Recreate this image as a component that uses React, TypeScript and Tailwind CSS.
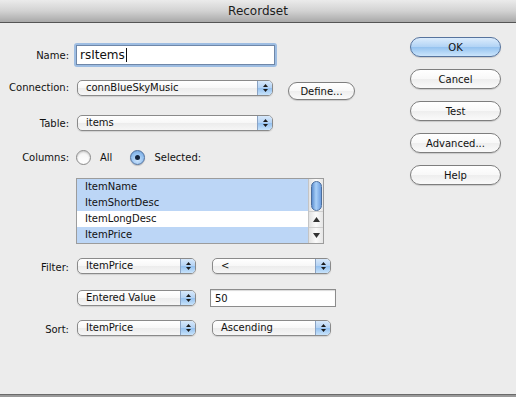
import React from "react";

const F = "font-['DejaVu_Sans',sans-serif]";

function Arrows() {
  return (
    <svg width="7" height="10" viewBox="0 0 7 10">
      <path d="M3.5 1 L6 4 L1 4 Z" fill="#1b1b1b" />
      <path d="M3.5 9 L6 6 L1 6 Z" fill="#1b1b1b" />
    </svg>
  );
}

function Popup({ w, text }: { w: string; text: string }) {
  return (
    <div
      className={`flex items-center h-[16px] ${w} rounded-[5px] border border-[#8a8a8a] bg-[linear-gradient(#ffffff_0%,#f7f7f7_50%,#ececec_51%,#f6f6f6_100%)] shadow-[0_1px_1px_rgba(0,0,0,0.12)] overflow-hidden`}
    >
      <span className="pl-[8px] text-[10px] leading-[14px] text-[#111]">{text}</span>
      <div className="ml-auto h-full w-[15px] border-l border-[#8aa3c4] bg-[linear-gradient(#d7e8fa_0%,#b3d2f4_50%,#93c0ef_51%,#c8e3fb_100%)] flex items-center justify-center">
        <Arrows />
      </div>
    </div>
  );
}

function Button({ children, blue, w, h }: { children: React.ReactNode; blue?: boolean; w: string; h: string }) {
  return (
    <div
      className={`${w} ${h} rounded-full border flex items-center justify-center text-[10px] text-[#111] shadow-[0_1px_1px_rgba(0,0,0,0.15)] ${
        blue
          ? "border-[#56739d] bg-[linear-gradient(#dcecfc_0%,#b1d3f5_50%,#94c2ef_51%,#cbe5fc_100%)]"
          : "border-[#7e7e7e] bg-[linear-gradient(#ffffff_0%,#f8f8f8_50%,#eeeeee_51%,#fafafa_100%)]"
      }`}
    >
      {children}
    </div>
  );
}

function Radio({ selected }: { selected?: boolean }) {
  return selected ? (
    <div className="w-[15px] h-[15px] rounded-full border border-[#4f6f9c] bg-[radial-gradient(circle_at_50%_70%,#cfe6fd_0%,#8fbdee_60%,#6fa0d8_100%)] flex items-center justify-center shadow-[0_1px_1px_rgba(0,0,0,0.2)]">
      <div className="w-[5px] h-[5px] rounded-full bg-[#14243d]" />
    </div>
  ) : (
    <div className="w-[15px] h-[15px] rounded-full border border-[#8a8a8a] bg-[linear-gradient(#f4f4f4,#ffffff)] shadow-[inset_0_1px_2px_rgba(0,0,0,0.2)]" />
  );
}

function Label({ children, className = "" }: { children: React.ReactNode; className?: string }) {
  return <div className={`w-[70px] pr-[1px] text-right text-[10px] text-[#111] ${className}`}>{children}</div>;
}

export default function App() {
  const rows = [
    { t: "ItemName", sel: true },
    { t: "ItemShortDesc", sel: true },
    { t: "ItemLongDesc", sel: false },
    { t: "ItemPrice", sel: true },
  ];
  return (
    <div className={`w-[516px] h-[397px] bg-[#ececec] flex flex-col ${F}`}>
      <div className="h-[23px] shrink-0 border-b border-[#555] bg-[linear-gradient(#ebebeb,#d2d2d2_50%,#a9a9a9)] flex items-center justify-center">
        <span className="text-[12px] text-[#1c1c1c] leading-none">Recordset</span>
      </div>
      <div className="flex flex-1">
        <div className="w-[400px] flex flex-col">
          {/* Name */}
          <div className="flex items-center h-[24px] mt-[20px]">
            <Label>Name:</Label>
            <div className="ml-[4px] w-[203px] h-[24px] rounded-[3px] bg-[#9ebde2] p-[2px]">
              <div className="w-full h-full bg-white border border-[#6f87a8] flex items-center pl-[3px]">
                <span className="text-[12px] leading-none text-[#111]">rsItems</span>
                <span className="ml-[1px] w-[1px] h-[14px] bg-[#111]" />
              </div>
            </div>
          </div>
          {/* Connection */}
          <div className="flex items-start h-[20px] mt-[13px]">
            <Label className="leading-[16px]">Connection:</Label>
            <div className="ml-[7px]">
              <Popup w="w-[196px]" text="connBlueSkyMusic" />
            </div>
            <div className="ml-[15px] mt-[2px]">
              <Button w="w-[67px]" h="h-[18px]">Define...</Button>
            </div>
          </div>
          {/* Table */}
          <div className="flex items-start h-[16px] mt-[15px]">
            <Label className="leading-[18px]">Table:</Label>
            <div className="ml-[7px]">
              <Popup w="w-[196px]" text="items" />
            </div>
          </div>
          {/* Columns */}
          <div className="flex items-center h-[15px] mt-[19px]">
            <Label className="leading-[18px]">Columns:</Label>
            <div className="ml-[6px]"><Radio /></div>
            <span className="ml-[9px] text-[10px] text-[#111]">All</span>
            <div className="ml-[18px]"><Radio selected /></div>
            <span className="ml-[9px] text-[10px] text-[#111]">Selected:</span>
          </div>
          {/* List */}
          <div className="ml-[76px] mt-[13px] w-[248px] h-[66px] border border-[#9c9c9c] bg-white flex">
            <div className="flex-1 flex flex-col">
              {rows.map((r) => (
                <div
                  key={r.t}
                  className={`h-[16px] pl-[8px] text-[10px] leading-[16px] text-[#111] ${r.sel ? "bg-[#bcd6f6]" : "bg-white"}`}
                >
                  {r.t}
                </div>
              ))}
            </div>
            <div className="w-[15px] border-l border-[#c4c4c4] flex flex-col bg-[linear-gradient(90deg,#e2e2e2,#fbfbfb_50%,#e6e6e6)]">
              <div className="h-[32px] flex justify-center pt-[2px]">
                <div className="w-[11px] h-[30px] rounded-full border border-[#4c6e9c] bg-[linear-gradient(90deg,#5d8fd0,#a9d0f8_45%,#6d9ee0)]" />
              </div>
              <div className="h-[16px] border-t border-[#cfcfcf] flex items-center justify-center">
                <svg width="7" height="5" viewBox="0 0 7 5"><path d="M3.5 0 L7 5 L0 5 Z" fill="#333" /></svg>
              </div>
              <div className="h-[16px] border-t border-[#cfcfcf] flex items-center justify-center">
                <svg width="7" height="5" viewBox="0 0 7 5"><path d="M3.5 5 L7 0 L0 0 Z" fill="#333" /></svg>
              </div>
            </div>
          </div>
          {/* Filter */}
          <div className="flex items-start h-[16px] mt-[14px]">
            <Label className="leading-[20px]">Filter:</Label>
            <div className="ml-[7px]"><Popup w="w-[119px]" text="ItemPrice" /></div>
            <div className="ml-[16px]"><Popup w="w-[119px]" text="<" /></div>
          </div>
          {/* Entered Value */}
          <div className="flex items-start h-[18px] mt-[15px]">
            <div className="w-[70px]" />
            <div className="ml-[7px] mt-[1px]"><Popup w="w-[119px]" text="Entered Value" /></div>
            <div className="ml-[14px] w-[126px] h-[18px] border border-[#8c8c8c] bg-white shadow-[inset_0_1px_1px_rgba(0,0,0,0.15)] flex items-center pl-[4px]">
              <span className="text-[10px] text-[#111]">50</span>
            </div>
          </div>
          {/* Sort */}
          <div className="flex items-start h-[16px] mt-[13px]">
            <Label className="leading-[20px]">Sort:</Label>
            <div className="ml-[7px]"><Popup w="w-[119px]" text="ItemPrice" /></div>
            <div className="ml-[16px]"><Popup w="w-[119px]" text="Ascending" /></div>
          </div>
        </div>
        <div className="ml-[10px] mt-[14px] flex flex-col gap-[12px]">
          <Button blue w="w-[91px]" h="h-[20px]">OK</Button>
          <Button w="w-[91px]" h="h-[20px]">Cancel</Button>
          <Button w="w-[91px]" h="h-[20px]">Test</Button>
          <Button w="w-[91px]" h="h-[20px]">Advanced...</Button>
          <Button w="w-[91px]" h="h-[20px]">Help</Button>
        </div>
      </div>
      <div className="h-[3px] shrink-0 border-t border-[#6a6a6a] bg-[#9a9a9a]" />
    </div>
  );
}
